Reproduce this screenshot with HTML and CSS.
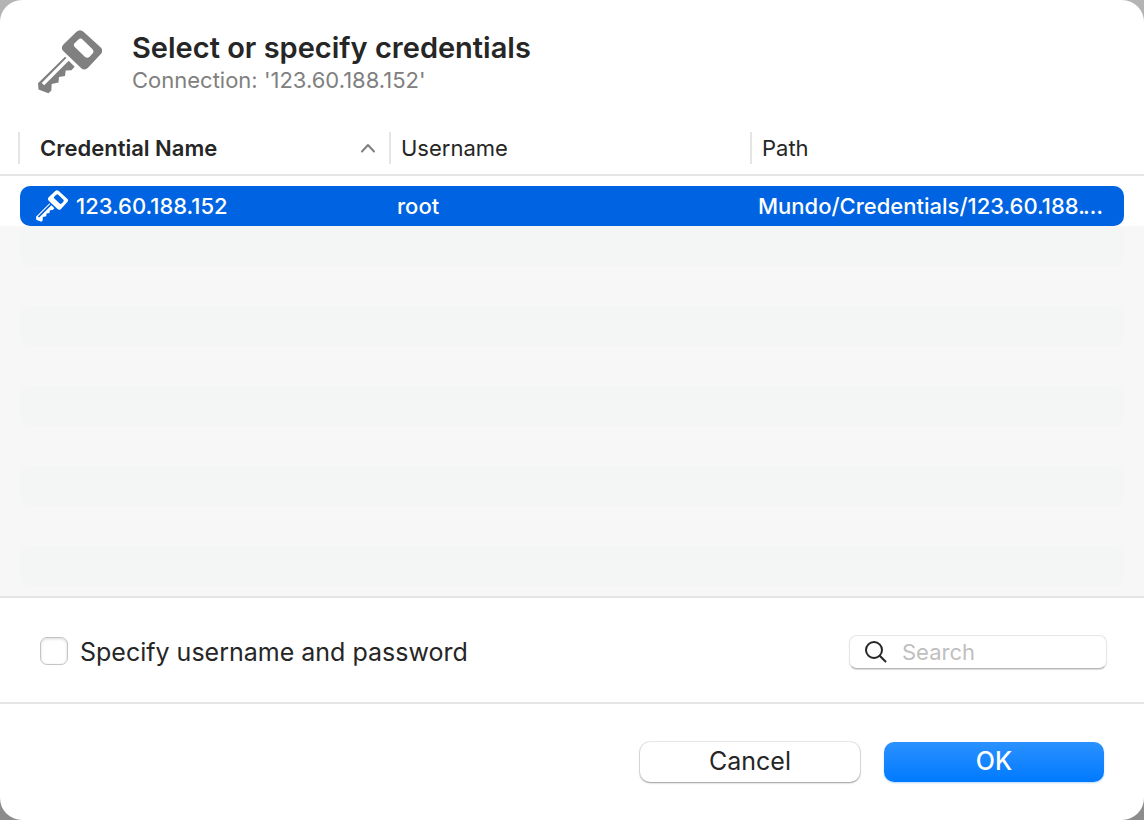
FILE: index.html
```html
<!DOCTYPE html>
<html lang="en">
<head>
<meta charset="utf-8">
<meta name="viewport" content="width=device-width, initial-scale=1">
<title>Select or specify credentials</title>
<link rel="stylesheet" href="styles.css">
</head>
<body>
<svg class="defs" aria-hidden="true">
  <symbol id="key" viewBox="0 0 64 64">
    <path fill-rule="evenodd" d="M38.5 1.800Q42-1.300 45.500 1.800L62.500 17.300Q66 20.700 62.600 24.200L50 37.800Q46.500 41.300 43 38L25.500 21.300Q22.200 18 25.400 14.500ZM40.500 9.500L36.800 13Q34.800 15 36.800 17L46.800 26.700Q49.300 29 51.600 26.700L54.600 23.500Q56.500 21.300 54.300 19L45 9.900Q42.600 7.500 40.500 9.500Z"/>
    <path d="M27 26.700L28.400 28.100L3.700 52.900L6.200 55.200L30.700 30.700L36.700 36.700L33.500 40.200L27.700 40.600L27 46L21 47L20.500 52.600L13.700 53.900L13.300 60.800L10.300 63.300L0.500 59.600L0 53.300Z"/>
  </symbol>
</svg>
<main class="dialog">
  <header class="heading">
    <svg class="heading-icon" aria-hidden="true"><use href="#key"/></svg>
    <div>
      <h1 class="title">Select or specify credentials</h1>
      <p class="subtitle">Connection: '123.60.188.152'</p>
    </div>
  </header>
  <section class="list">
    <table class="table">
      <thead>
        <tr class="columns">
          <th class="column sorted" scope="col" aria-sort="ascending">Credential Name
            <svg class="chevron" viewBox="0 0 16 10" aria-hidden="true"><path d="M2 8.500L8 2L14 8.500"/></svg>
          </th>
          <th class="column" scope="col">Username</th>
          <th class="column" scope="col">Path</th>
        </tr>
      </thead>
      <tbody class="rows">
        <tr class="row">
          <td class="cell name"><svg class="row-icon" aria-hidden="true"><use href="#key"/></svg>123.60.188.152</td>
          <td class="cell">root</td>
          <td class="cell path">Mundo/Credentials/123.60.188.152</td>
        </tr>
      </tbody>
    </table>
    <div class="stripes" aria-hidden="true">
      <div class="stripe"></div>
      <div class="stripe"></div>
      <div class="stripe"></div>
      <div class="stripe"></div>
      <div class="stripe"></div>
    </div>
  </section>
  <section class="options">
    <label class="specify"><input class="checkbox" type="checkbox">Specify username and password</label>
    <label class="search">
      <svg class="search-icon" viewBox="0 0 24 24" aria-hidden="true"><circle cx="10" cy="10" r="8"/><path d="M15.700 15.700L21.500 21.500"/></svg>
      <input class="search-input" type="text" placeholder="Search" aria-label="Search">
    </label>
  </section>
  <footer class="actions">
    <button class="button" type="button">Cancel</button>
    <button class="button primary" type="button">OK</button>
  </footer>
</main>
</body>
</html>
```
FILE: styles.css
```css
* {
  box-sizing: border-box;
}

body {
  margin: 0;
  background: linear-gradient(#b4b4b4, #8c8c8c);
  color: #262626;
  font-family: Inter, "Liberation Sans", sans-serif;
}

.defs {
  display: none;
}

.dialog {
  display: flex;
  flex-direction: column;
  min-height: 100vh;
  background: #fff;
  border-radius: 22px;
  overflow: hidden;
}

.heading {
  display: flex;
  align-items: center;
  gap: 30px;
  padding: 29px 38px 25px;
}

.heading-icon {
  width: 64px;
  height: 64px;
  fill: #808080;
}

.title {
  margin: 0;
  font-size: 29px;
  font-weight: 600;
  line-height: 38px;
}

.subtitle {
  margin: 0;
  padding-bottom: 2px;
  color: #808080;
  font-size: 22px;
  line-height: 26px;
}

.list {
  display: flex;
  flex: 1;
  flex-direction: column;
  border-bottom: 2px solid #e5e5e5;
}

.table,
.table thead,
.rows {
  display: block;
}

.columns {
  display: grid;
  grid-template-columns: 371fr 361fr 394fr;
  padding: 12px 0 10px 18px;
  border-bottom: 2px solid #e5e5e5;
}

.column {
  display: flex;
  align-items: center;
  justify-content: space-between;
  height: 32px;
  padding: 0 13px 0 10px;
  border-left: 2px solid #e5e5e5;
  font-size: 22px;
  font-weight: 400;
  text-align: left;
}

.sorted {
  padding-left: 20px;
  font-weight: 600;
}

.chevron {
  width: 16px;
  height: 10px;
  fill: none;
  stroke: #808080;
  stroke-width: 2;
  stroke-linecap: round;
  stroke-linejoin: round;
}

.rows {
  padding: 10px 20px 0;
}

.row {
  display: grid;
  grid-template-columns: 377fr 361fr 366fr;
  align-items: center;
  height: 40px;
  border-radius: 10px;
  background: #0063e1;
  color: #fff;
  font-size: 22px;
  font-weight: 500;
}

.cell {
  min-width: 0;
  padding: 0;
  overflow: hidden;
  text-overflow: ellipsis;
  white-space: nowrap;
}

.name {
  display: flex;
  align-items: center;
  gap: 8px;
  padding-left: 16px;
}

.path {
  padding-right: 20px;
}

.row-icon {
  width: 32px;
  height: 32px;
  fill: #fff;
}

.stripes {
  display: flex;
  flex: 1;
  flex-direction: column;
  gap: 40px;
  padding: 0 20px 10px;
  background: #f7f7f7;
}

.stripe {
  height: 40px;
  border-radius: 10px;
  background: #f4f5f5;
}

.options {
  display: flex;
  align-items: center;
  justify-content: space-between;
  padding: 34px 37px 30px 40px;
  border-bottom: 2px solid #e5e5e5;
}

.specify {
  display: flex;
  align-items: center;
  gap: 12px;
  font-size: 25px;
  line-height: 40px;
}

.checkbox {
  width: 28px;
  height: 28px;
  margin: 0 0 2px;
  appearance: none;
  border: 1px solid #c4c4c4;
  border-radius: 7px;
  background: #fff;
  box-shadow: inset 0 1px 3px rgba(0, 0, 0, 0.15);
}

.checkbox:checked {
  background: #0a7aff;
}

.search {
  display: flex;
  align-items: center;
  gap: 14px;
  width: 258px;
  height: 34px;
  padding: 0 14px;
  border: 1px solid #e6e6e6;
  border-bottom-color: #b8b8b8;
  border-radius: 8px;
  background: #fff;
  box-shadow: 0 1px 1px rgba(0, 0, 0, 0.15);
}

.search-icon {
  flex: none;
  width: 24px;
  height: 24px;
  fill: none;
  stroke: #262626;
  stroke-width: 2;
  stroke-linecap: round;
}

.search-input {
  flex: 1;
  min-width: 0;
  padding: 0;
  border: 0;
  outline: 0;
  background: transparent;
  color: #262626;
  font-family: inherit;
  font-size: 22px;
}

.search-input::placeholder {
  color: #bfbfbf;
}

.actions {
  display: flex;
  justify-content: flex-end;
  gap: 24px;
  padding: 38px 40px;
}

.button {
  width: 220px;
  height: 40px;
  padding: 0 0 2px;
  border: 0;
  border-radius: 10px;
  background: #fff;
  box-shadow: 0 0 0 1px rgba(0, 0, 0, 0.08), 0 1px 2px rgba(0, 0, 0, 0.35);
  color: #262626;
  font-family: inherit;
  font-size: 25px;
  line-height: 38px;
}

.primary {
  background: linear-gradient(#2b91ff, #007aff);
  box-shadow: 0 1px 2px rgba(0, 122, 255, 0.3);
  color: #fff;
  font-weight: 500;
}
```
